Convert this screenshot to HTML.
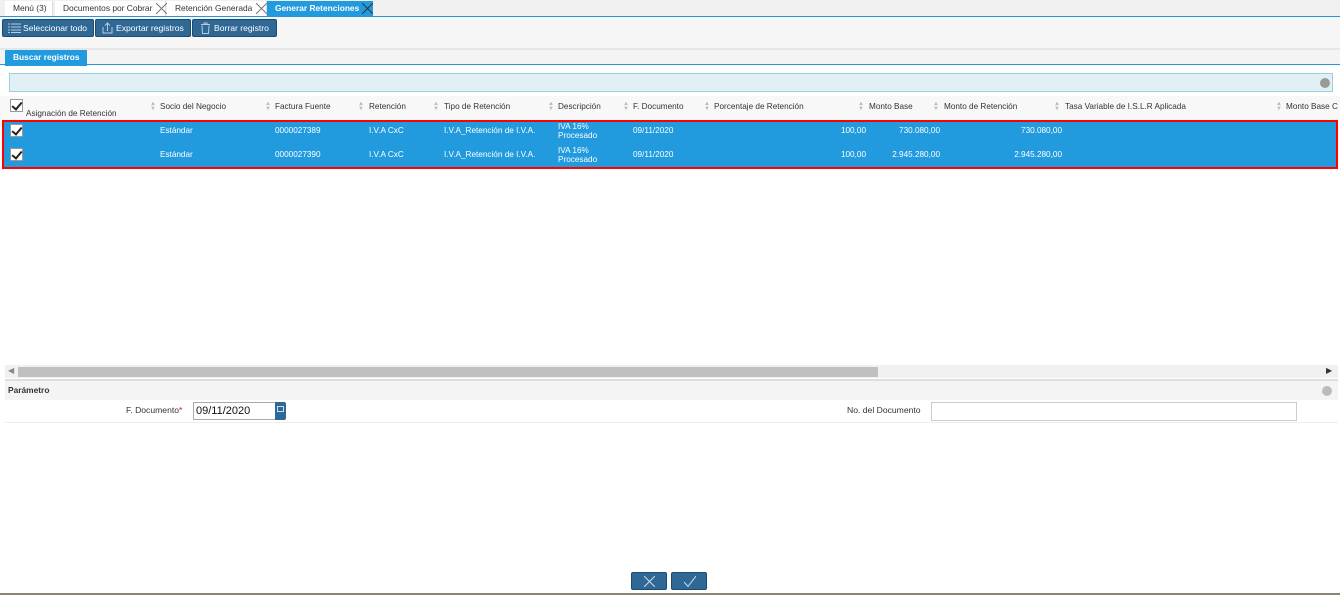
<!DOCTYPE html>
<html><head><meta charset="utf-8"><style>
*{margin:0;padding:0;box-sizing:border-box}
body{width:1340px;height:595px;position:relative;background:#fff;font-family:"Liberation Sans",sans-serif;font-size:9px;color:#333;overflow:hidden}
.a{position:absolute;white-space:nowrap}
.tab{position:absolute;top:1px;height:15px;background:#fff;border-right:1px solid #ddd;font-size:8.4px;line-height:14px;padding-left:8px;color:#333}
.x{position:absolute}
.btn{position:absolute;top:19px;height:18px;background:#2f6795;border:1px solid #1d4b70;border-radius:2px;color:#fff;font-size:8.6px;line-height:16px}
.h{position:absolute;top:102px;font-size:8.2px;color:#333;white-space:nowrap}
.s{position:absolute;top:102px;color:#bbb;font-size:6px;line-height:5px}
.c{position:absolute;color:#fff;font-size:8.2px;white-space:nowrap}
.cb{position:absolute;width:13px;height:13px;background:#fff;border:1px solid #999}
.cb:after{content:"";position:absolute;left:3px;top:0px;width:4px;height:8px;border:solid #222;border-width:0 2px 2px 0;transform:rotate(40deg)}
</style></head><body>
<div class="a" style="left:0;top:0;width:1340px;height:17px;background:#f0f0f0;border-bottom:1px solid #2a94d6"></div>
<div class="tab" style="left:5px;width:48px">Menú (3)</div>
<div class="tab" style="left:55px;width:111px">Documentos por Cobrar</div>
<svg class="x" style="left:156px;top:3px" width="11" height="11"><path d="M0 0L11 11M11 0L0 11" stroke="#777" stroke-width="1"/></svg>
<div class="tab" style="left:167px;width:100px">Retención Generada</div>
<svg class="x" style="left:256px;top:3px" width="11" height="11"><path d="M0 0L11 11M11 0L0 11" stroke="#777" stroke-width="1"/></svg>
<div class="tab" style="left:267px;width:106px;background:#229ade;color:#fff;font-weight:bold;border:none">Generar Retenciones</div>
<svg class="x" style="left:362px;top:3px" width="11" height="11"><path d="M0 0L11 11M11 0L0 11" stroke="#333" stroke-width="1"/></svg>
<div class="a" style="left:0;top:17px;width:1340px;height:31px;background:#f6f6f6"></div>
<div class="btn" style="left:2px;width:92px;padding-left:20px"><svg class="x" style="left:5px;top:3px" width="13" height="10"><path d="M0 1h2M0 4h2M0 7h2M0 9.5h2M3 1h10M3 4h10M3 7h10M3 9.5h10" stroke="#bcd" stroke-width="1"/></svg>Seleccionar todo</div>
<div class="btn" style="left:95px;width:96px;padding-left:20px"><svg class="x" style="left:6px;top:2px" width="11" height="12"><path d="M1 5v6h9V5M5.5 9V1M3 3.5L5.5 1 8 3.5" stroke="#bcd" fill="none" stroke-width="1"/></svg>Exportar registros</div>
<div class="btn" style="left:192px;width:85px;padding-left:21px"><svg class="x" style="left:7px;top:2px" width="11" height="12"><path d="M1 2.5h9M4 2.5V1h3v1.5M2 3.5l.5 8h6l.5-8" stroke="#bcd" fill="none" stroke-width="1"/></svg>Borrar registro</div>
<div class="a" style="left:0;top:48px;width:1340px;height:2px;background:#e6e6e6"></div>
<div class="a" style="left:0;top:50px;width:1340px;height:15px;background:#f4f4f4;border-bottom:1px solid #2a94d6"></div>
<div class="a" style="left:5px;top:50px;width:82px;height:16px;background:#229ade;color:#fff;font-weight:bold;font-size:8.4px;line-height:15px;padding-left:8px">Buscar registros</div>
<div class="a" style="left:9px;top:73px;width:1324px;height:19px;background:#e1f0f5;border:1px solid #9ccfe0"></div>
<div class="a" style="left:1320px;top:78px;width:10px;height:10px;border-radius:50%;background:#999"></div>
<div class="a" style="left:0;top:96px;width:1340px;height:24px;background:#f8f8f8"></div>
<div class="cb" style="left:10px;top:99px"></div>
<div class="h" style="left:26px;top:109px">Asignación de Retención</div>
<div class="s" style="left:150px">▲<br>▼</div><div class="h" style="left:160px">Socio del Negocio</div>
<div class="s" style="left:265px">▲<br>▼</div><div class="h" style="left:275px">Factura Fuente</div>
<div class="s" style="left:358px">▲<br>▼</div><div class="h" style="left:369px">Retención</div>
<div class="s" style="left:433px">▲<br>▼</div><div class="h" style="left:444px">Tipo de Retención</div>
<div class="s" style="left:548px">▲<br>▼</div><div class="h" style="left:558px">Descripción</div>
<div class="s" style="left:623px">▲<br>▼</div><div class="h" style="left:633px">F. Documento</div>
<div class="s" style="left:704px">▲<br>▼</div><div class="h" style="left:714px">Porcentaje de Retención</div>
<div class="s" style="left:858px">▲<br>▼</div><div class="h" style="left:869px">Monto Base</div>
<div class="s" style="left:933px">▲<br>▼</div><div class="h" style="left:944px">Monto de Retención</div>
<div class="s" style="left:1054px">▲<br>▼</div><div class="h" style="left:1065px">Tasa Variable de I.S.L.R Aplicada</div>
<div class="s" style="left:1276px">▲<br>▼</div><div class="h" style="left:1286px">Monto Base C</div>
<div class="a" style="left:2px;top:120px;width:1336px;height:49px;background:#219ade;border:2px solid #f00"></div>
<div class="cb" style="left:10px;top:124px"></div>
<div class="cb" style="left:10px;top:148px"></div>
<div class="c" style="left:160px;top:126px">Estándar</div><div class="c" style="left:160px;top:150px">Estándar</div>
<div class="c" style="left:275px;top:126px">0000027389</div><div class="c" style="left:275px;top:150px">0000027390</div>
<div class="c" style="left:369px;top:126px">I.V.A CxC</div><div class="c" style="left:369px;top:150px">I.V.A CxC</div>
<div class="c" style="left:444px;top:126px">I.V.A_Retención de I.V.A.</div><div class="c" style="left:444px;top:150px">I.V.A_Retención de I.V.A.</div>
<div class="c" style="left:558px;top:122px;line-height:9px">IVA 16%<br>Procesado</div><div class="c" style="left:558px;top:146px;line-height:9px">IVA 16%<br>Procesado</div>
<div class="c" style="left:633px;top:126px">09/11/2020</div><div class="c" style="left:633px;top:150px">09/11/2020</div>
<div class="c" style="left:816px;width:50px;text-align:right;top:126px">100,00</div><div class="c" style="left:816px;width:50px;text-align:right;top:150px">100,00</div>
<div class="c" style="left:860px;width:80px;text-align:right;top:126px">730.080,00</div><div class="c" style="left:860px;width:80px;text-align:right;top:150px">2.945.280,00</div>
<div class="c" style="left:980px;width:82px;text-align:right;top:126px">730.080,00</div><div class="c" style="left:980px;width:82px;text-align:right;top:150px">2.945.280,00</div>
<div class="a" style="left:5px;top:365px;width:1333px;height:13px;background:#f0f0f0"></div>
<div class="a" style="left:18px;top:367px;width:860px;height:10px;background:#c0c0c0"></div>
<div class="a" style="left:8px;top:366px;font-size:8px;color:#888">◀</div>
<div class="a" style="left:1326px;top:366px;font-size:8px;color:#333">▶</div>
<div class="a" style="left:5px;top:379px;width:1333px;height:2px;background:#ddd"></div>
<div class="a" style="left:5px;top:381px;width:1333px;height:19px;background:#f4f4f4;font-weight:bold;font-size:8.4px;line-height:18px;padding-left:3px">Parámetro</div>
<div class="a" style="left:1322px;top:386px;width:10px;height:10px;border-radius:50%;background:#bbb"></div>
<div class="a" style="left:5px;top:422px;width:1333px;height:1px;background:#eee"></div>
<div class="a" style="left:126px;top:405px;font-size:8.6px">F. Documento<span style="color:#d00">*</span></div>
<div class="a" style="left:193px;top:402px;width:83px;height:18px;border:1px solid #aaa;font-size:11px;line-height:16px;padding-left:2px;color:#111">09/11/2020</div>
<div class="a" style="left:275px;top:402px;width:11px;height:18px;background:#2f6795;border-radius:0 2px 2px 0"></div>
<div class="a" style="left:277px;top:406px;width:7px;height:6px;border:1px solid #cde"></div>
<div class="a" style="left:847px;top:405px;font-size:8.6px">No. del Documento</div>
<div class="a" style="left:931px;top:402px;width:366px;height:19px;border:1px solid #ccc"></div>
<div class="btn" style="left:631px;top:572px;width:36px;height:18px"><svg class="x" style="left:12px;top:3px" width="11" height="11"><path d="M0 0L11 11M11 0L0 11" stroke="#cde" stroke-width="1"/></svg></div>
<div class="btn" style="left:671px;top:572px;width:36px;height:18px"><svg class="x" style="left:12px;top:3px" width="12" height="11"><path d="M0 6L4 10.5L12 0" stroke="#cde" fill="none" stroke-width="1"/></svg></div>
<div class="a" style="left:0;top:593px;width:1340px;height:2px;background:#8c8472"></div>
</body></html>
